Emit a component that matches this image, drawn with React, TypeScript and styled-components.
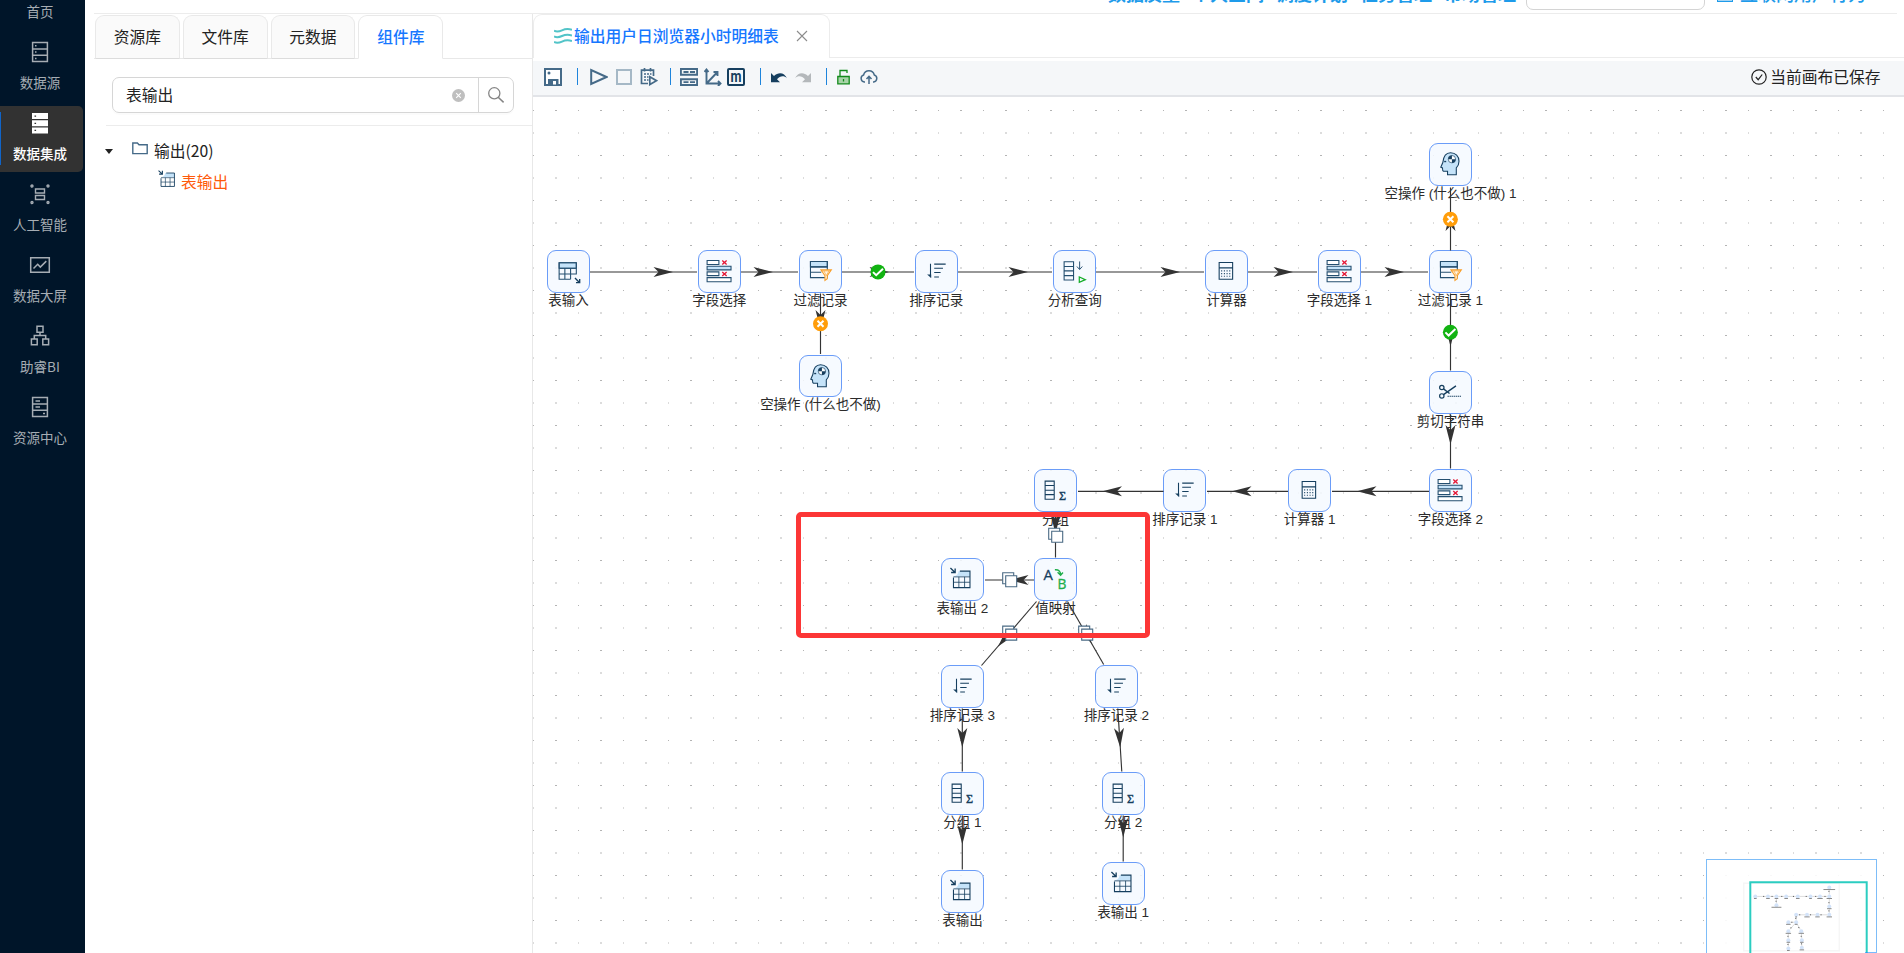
import React from "react";
import styled, { createGlobalStyle, css } from "styled-components";

const sans = `"Noto Sans CJK SC", "Noto Sans", sans-serif`;
const ink = "#163f5f";
const steel = "#456a88";

const GlobalStyle = createGlobalStyle`
  * { box-sizing: border-box; }
  body { margin: 0; overflow: hidden; background: #fff; font-family: ${sans}; font-size: 15.75px; color: #222; }
  svg { display: block; flex: none; }
`;

const Page = styled.div`
  display: flex;
  width: 1904px;
  height: 953px;
  overflow: hidden;
`;

/* ---------- left navigation ---------- */
const Sidebar = styled.nav`
  flex: none;
  width: 85px;
  height: 100%;
  background: #001529;
  overflow: hidden;
`;
const NavList = styled.div`
  display: flex;
  flex-direction: column;
  gap: 4.875px;
  margin-top: -35.75px;
`;
const NavItem = styled.div<{ $active?: boolean }>`
  display: flex;
  flex-direction: column;
  align-items: center;
  flex: none;
  width: 83px;
  height: 66px;
  padding: 6px 3px 0 0;
  font-size: 13.5px;
  color: #a6adb4;
  border-radius: 0 5px 5px 0;
  ${(p) =>
    p.$active &&
    css`
      color: #fff;
      font-weight: 500;
      background: linear-gradient(#1064c8, #1064c8) 0 6px / 1px 53px no-repeat #323232;
    `}
`;
const NavLabel = styled.span`
  margin-top: 8px;
  line-height: 20px;
  white-space: nowrap;
`;

/* ---------- header ---------- */
const Main = styled.div`
  flex: 1;
  min-width: 0;
  display: flex;
  flex-direction: column;
  padding-left: 9px;
`;
const Header = styled.header`
  flex: none;
  display: flex;
  align-items: flex-end;
  height: 14px;
  margin-right: 7px;
  padding-left: 1014px;
  border-bottom: 1px solid #ececec;
  overflow: hidden;
  color: #1e9bea;
  font-size: 18px;
  font-weight: 700;
`;
const HeaderLinks = styled.div`
  display: flex;
  gap: 12px;
  width: 418px;
  line-height: 24px;
  margin-bottom: 8px;
  white-space: nowrap;
`;
const HeaderInput = styled.div`
  flex: none;
  width: 179px;
  height: 36px;
  margin-bottom: 3px;
  border: 1px solid #d4d4d4;
  border-radius: 7px;
`;
const HeaderUser = styled.div`
  display: flex;
  align-items: flex-end;
  gap: 7px;
  margin: 0 0 8px 12px;
  line-height: 24px;
  font-weight: 500;
  white-space: nowrap;
`;
const UserMark = styled.i`
  width: 16px;
  height: 16px;
  margin-bottom: 3px;
  border: 1.5px solid #1e9bea;
  background: #a5d4f3;
`;
const Work = styled.div`
  flex: 1;
  min-height: 0;
  display: flex;
`;

/* ---------- component library panel ---------- */
const Library = styled.aside`
  flex: none;
  width: 439px;
  border-right: 1px solid #e8e8e8;
`;
const Tabs = styled.div`
  display: flex;
  gap: 3px;
  height: 45px;
  padding: 1px 0 0 1px;
  box-shadow: inset 0 -1px #e8e8e8;
`;
const Tab = styled.div<{ $active?: boolean }>`
  width: 84.8px;
  height: 44px;
  line-height: 42px;
  text-align: center;
  border: 1px solid #e9e9e9;
  border-radius: 9px 9px 0 0;
  border-bottom-color: ${(p) => (p.$active ? "#fff" : "#dcdcdc")};
  background: ${(p) => (p.$active ? "#fff" : "#fafafa")};
  color: ${(p) => (p.$active ? "#1677ff" : "#222")};
  font-weight: ${(p) => (p.$active ? 500 : 400)};
`;
const SearchRow = styled.div`
  display: flex;
  margin: 18px 18px 0 18px;
  height: 36px;
  border: 1px solid #d6d6d6;
  border-radius: 7px;
  box-shadow: 0 2px 0 rgba(0, 0, 0, 0.015);
`;
const SearchText = styled.div`
  flex: 1;
  padding-left: 13px;
  line-height: 34px;
`;
const ClearDot = styled.div`
  align-self: center;
  margin-right: 13px;
`;
const SearchButton = styled.div`
  width: 35px;
  border-left: 1px solid #d6d6d6;
  display: flex;
  align-items: center;
  justify-content: center;
`;
const Tree = styled.div`
  margin: 12px 0 0 12px;
  border-top: 1px solid #ececec;
  padding-top: 10px;
`;
const TreeRow = styled.div<{ $leaf?: boolean }>`
  display: flex;
  align-items: center;
  height: 30.5px;
  line-height: 30px;
  padding-left: ${(p) => (p.$leaf ? "52px" : "0")};
  gap: ${(p) => (p.$leaf ? "6px" : "0")};
  color: ${(p) => (p.$leaf ? "#ff5a0a" : "#222")};
`;
const Caret = styled.i`
  width: 0;
  height: 0;
  margin: 0 19px 0 -1px;
  border: 4px solid transparent;
  border-top: 5px solid #222;
  border-bottom: 0;
`;
const FolderBox = styled.div`
  margin: -6px 6px 0 0;
`;
const LeafIcon = styled.div`
  margin-top: -6px;
`;

/* ---------- editor ---------- */
const Editor = styled.section`
  flex: 1;
  min-width: 0;
  display: flex;
  flex-direction: column;
`;
const EditorTabs = styled.div`
  flex: none;
  height: 44px;
  margin-bottom: 2.5px;
  box-shadow: inset 0 -1px #ececec;
`;
const EditorTab = styled.div`
  display: flex;
  align-items: center;
  width: 297px;
  height: 44px;
  padding: 0 0 2px 20px;
  background: #fff;
  border: 1px solid #ececec;
  border-bottom: 0;
  border-radius: 9px 9px 0 0;
  color: #1677ff;
  font-weight: 500;
  white-space: nowrap;
`;
const TabTitle = styled.span`
  margin: 0 17px 0 2px;
  line-height: 24px;
`;
const Toolbar = styled.div`
  flex: none;
  display: flex;
  align-items: center;
  height: 36px;
  padding: 0 23.5px 2px 11px;
  background: #f5f7f9;
  border-bottom: 2px solid #e2e4e8;
  color: #222;
`;
const Tool = styled.div<{ $gap?: number }>`
  margin-left: ${(p) => p.$gap ?? 0}px;
`;
const Divider = styled.i<{ $gap: number }>`
  width: 1px;
  height: 17px;
  margin-left: ${(p) => p.$gap}px;
  background: #1d84dc;
`;
const SavedState = styled.div`
  display: flex;
  align-items: center;
  gap: 3px;
  margin-left: auto;
  line-height: 24px;
`;
const Canvas = styled.div`
  position: relative;
  flex: 1;
  overflow: hidden;
`;
const Layer = styled.svg`
  position: absolute;
  left: 0;
  top: 0;
  pointer-events: none;
`;
const OX = 533;
const OY = 96.5;
const NodeBox = styled.div<{ $x: number; $y: number }>`
  position: absolute;
  left: ${(p) => p.$x - OX - 21.4}px;
  top: ${(p) => p.$y - OY - 21.4}px;
  display: flex;
  flex-direction: column;
  align-items: center;
  width: 42.8px;
`;
const NodeTile = styled.div`
  width: 42.8px;
  height: 42.8px;
  flex: none;
  border: 1.125px solid #6a9cf8;
  border-radius: 9px;
  background: rgba(245, 249, 255, 0.86);
  svg { margin: -1px; }
`;
const NodeLabel = styled.span`
  margin-top: -1px;
  line-height: 17px;
  font-family: "Liberation Sans", ${sans};
  font-size: 13.5px;
  color: #2b2b2b;
  white-space: nowrap;
`;
const Highlight = styled.div`
  position: absolute;
  left: ${796 - OX}px;
  top: ${511.5 - OY}px;
  width: 354px;
  height: 126px;
  border: 5px solid #fc3636;
  border-radius: 5px;
`;
const MiniMap = styled.div`
  position: absolute;
  left: ${1706 - OX}px;
  top: ${859 - OY}px;
  width: 171px;
  height: 128px;
  border: 1px solid #7dbdf8;
  background: rgba(255, 255, 255, 0.9);
`;

/* ---------- icons ---------- */
type Kind =
  | "in" | "fields" | "filter" | "sort" | "query" | "calc"
  | "head" | "cut" | "group" | "map" | "out";

const glyphs: Record<Kind, React.ReactNode> = {
  in: (
    <>
      <path d="M36 38h51v16H36z" fill="#c5e3f9" />
      <path d="M87 73V38H36v49h34M36 54h51M36 71h51M53 54v33M70 54v33" />
      <path d="M83 83l14 14M97 86v11H86" stroke={ink} strokeWidth="4" />
    </>
  ),
  fields: (
    <>
      <path d="M27 31h35v12H27zM27 65h35v11H27zM27 82h71v12H27z" fill="#fff" />
      <path d="M27 48h71v11H27z" fill="#c5e3f9" />
      <path d="M72 31l13 12M85 31L72 43M72 65l13 12M85 65L72 77" stroke="#e51937" strokeWidth="4" />
    </>
  ),
  filter: (
    <>
      <path d="M34 34h50v16H34z" fill="#c5e3f9" />
      <path d="M34 34h50v48H34zM34 50h50M34 66h32" />
      <path d="M65 59h31L84 76v9l-7 5V76z" fill="#fff6e6" stroke="#f9a02c" />
      <path d="M66 62h28M74 62l7 14 8-14" stroke="#f9a02c" strokeWidth="2" />
    </>
  ),
  sort: (
    <>
      <path d="M46 41v40M57 42h34M57 54h26M57 67h19M57 80h14" stroke={ink} />
      <path d="M48 83L36 73h12z" fill={ink} stroke="none" />
    </>
  ),
  query: (
    <>
      <path d="M33 35h28v54H33zM33 49h28M33 62h28M33 76h28" />
      <path d="M79 34v23M71 49l8 9 8-9" strokeWidth="2.8" />
      <path d="M78 80v16l18-8z" stroke="#13ad27" strokeWidth="3.6" fill="none" />
    </>
  ),
  calc: (
    <>
      <path d="M42 37h40v50H42zM42 53h40" stroke={ink} />
      <path d="M48 62h30M48 70h30M48 78h30" stroke={ink} strokeDasharray="3 5" />
    </>
  ),
  head: (
    <>
      <path
        d="M55 94V84H43c-3-1-3-5-3-10l-5-2 6-14C43 39 51 29 64 29c15 0 25 11 25 25 0 9-3 15-8 20v20z"
        fill="#c5e3f9"
        stroke={ink}
      />
      <circle cx="68" cy="48" r="11" fill="#fff" stroke={ink} strokeWidth="2" />
      <path d="M68 48V37a11 11 0 0 0-11 11zM68 48v11a11 11 0 0 0 11-11z" fill={ink} stroke="none" />
      <path d="M45 55h6" stroke={ink} strokeWidth="4" />
    </>
  ),
  cut: (
    <>
      <circle cx="38" cy="49" r="6.5" stroke={ink} strokeWidth="3.6" />
      <circle cx="38" cy="74" r="6.5" stroke={ink} strokeWidth="3.6" />
      <path d="M43 53l18 14M43 70l37-26" stroke={ink} strokeWidth="4" />
      <path d="M55 75h40" stroke={ink} strokeWidth="3" strokeDasharray="4 2" />
    </>
  ),
  group: (
    <>
      <path d="M33 36h27v54H33zM33 49h27M33 63h27M33 76h27" stroke={ink} />
      <text x="74" y="91" fontSize="36" fontFamily="Liberation Serif, serif" fill={ink} stroke={ink} strokeWidth="1.2">Σ</text>
    </>
  ),
  map: (
    <>
      <text x="28" y="65" fontSize="44" fontFamily="Open Sans, sans-serif" fill={ink} stroke={ink} strokeWidth="0.8">A</text>
      <text x="70" y="92" fontSize="41" fontFamily="Open Sans, sans-serif" fill="#1fae4b" stroke="#1fae4b" strokeWidth="1">B</text>
      <path d="M62 35c12-1 17 5 17 15M70 42l9 9 7-8" stroke="#1fae4b" strokeWidth="4" />
    </>
  ),
  out: (
    <>
      <path d="M86 39v15H37c10-1 14-6 15-15z" fill="#c5e3f9" stroke="none" />
      <path d="M56 39h30v49H37V58" stroke={ink} />
      <path d="M37 56h49M37 72h49M53 56v32M70 56v32" stroke={ink} strokeWidth="2.4" />
      <path d="M28 30l13 12M42 31v12H30" stroke={ink} strokeWidth="4" />
    </>
  ),
};

const StepIcon = ({ kind, size = 42.8, box = "0 0 127 127" }: { kind: Kind; size?: number; box?: string }) => (
  <svg width={size} height={size} viewBox={box} fill="none" stroke="#244f70" strokeWidth="3.2">
    {glyphs[kind]}
  </svg>
);

const ServerIcon = ({ rows }: { rows: "dots" | "lines" }) => (
  <svg width="22" height="23" viewBox="0 0 22 23" fill="none" stroke="currentColor" strokeWidth="1.5">
    <path d="M3.6 1.6h14.8v19H3.6zM3.6 8h14.8M3.6 14.2h14.8" />
    {rows === "dots" ? (
      <path d="M6 4.8h1.5M6 11h1.5M6 17.4h1.5" />
    ) : (
      <path d="M6.5 5h4.5M6.5 11h4.5M14 17.4h2" />
    )}
  </svg>
);
const ServerSolid = () => (
  <svg width="22" height="23" viewBox="0 0 22 23" fill="#fff">
    <path d="M3 1h16v6H3zM3 8.2h16v6H3zM3 15.4h16v6H3z" />
    <path d="M5.5 3.5h1.6v1.2H5.5zM5.5 10.7h1.6v1.2H5.5zM5.5 17.8h1.6V19H5.5z" fill="#323232" />
  </svg>
);
const AiIcon = () => (
  <svg width="22" height="23" viewBox="0 0 22 23" fill="none" stroke="currentColor" strokeWidth="1.4">
    <path d="M6.5 6h9v4h-9zM6.5 12.5h9v4h-9z" />
    <circle cx="3" cy="3" r="1" /><circle cx="19" cy="3" r="1" />
    <circle cx="3" cy="19.5" r="1" /><circle cx="19" cy="19.5" r="1" />
  </svg>
);
const ScreenIcon = () => (
  <svg width="22" height="23" viewBox="0 0 22 23" fill="none" stroke="currentColor" strokeWidth="1.5">
    <path d="M1.700 3.700h18.600v14.600H1.700zM4.500 14.500l4.200-4.200 2.600 2.800 6-6" />
  </svg>
);
const BiIcon = () => (
  <svg width="22" height="23" viewBox="0 0 22 23" fill="none" stroke="currentColor" strokeWidth="1.5">
    <path d="M8 1.200h6v6H8zM2.400 13.900h5.800v5.800H2.400zM13.800 13.900h5.800v5.800h-5.800zM11 7.200v3.200M5.300 13.900v-3.500h11.400v3.500" />
  </svg>
);

const navItems: { label: string; icon: React.ReactNode; active?: boolean }[] = [
  { label: "首页", icon: <ServerIcon rows="dots" /> },
  { label: "数据源", icon: <ServerIcon rows="dots" /> },
  { label: "数据集成", icon: <ServerSolid />, active: true },
  { label: "人工智能", icon: <AiIcon /> },
  { label: "数据大屏", icon: <ScreenIcon /> },
  { label: "助睿BI", icon: <BiIcon /> },
  { label: "资源中心", icon: <ServerIcon rows="lines" /> },
];

/* ---------- flow data ---------- */
const nodes: { kind: Kind; x: number; y: number; label: string }[] = [
  { kind: "in", x: 568.5, y: 271.4, label: "表输入" },
  { kind: "fields", x: 719.3, y: 271.4, label: "字段选择" },
  { kind: "filter", x: 820.5, y: 271.4, label: "过滤记录" },
  { kind: "sort", x: 936.3, y: 271.4, label: "排序记录" },
  { kind: "query", x: 1074.7, y: 271.4, label: "分析查询" },
  { kind: "calc", x: 1226.5, y: 271.4, label: "计算器" },
  { kind: "fields", x: 1339.3, y: 271.4, label: "字段选择 1" },
  { kind: "filter", x: 1450.4, y: 271.4, label: "过滤记录 1" },
  { kind: "head", x: 1450.4, y: 164.5, label: "空操作 (什么也不做) 1" },
  { kind: "head", x: 820.5, y: 376, label: "空操作 (什么也不做)" },
  { kind: "cut", x: 1450.4, y: 392.8, label: "剪切字符串" },
  { kind: "fields", x: 1450.4, y: 490.6, label: "字段选择 2" },
  { kind: "calc", x: 1309.7, y: 490.6, label: "计算器 1" },
  { kind: "sort", x: 1184.8, y: 490.6, label: "排序记录 1" },
  { kind: "group", x: 1055.5, y: 490.6, label: "分组" },
  { kind: "map", x: 1055.5, y: 579.5, label: "值映射" },
  { kind: "out", x: 962.4, y: 579.5, label: "表输出 2" },
  { kind: "sort", x: 962.4, y: 686.6, label: "排序记录 3" },
  { kind: "sort", x: 1116.5, y: 686.6, label: "排序记录 2" },
  { kind: "group", x: 962.4, y: 793.4, label: "分组 1" },
  { kind: "group", x: 1123.2, y: 793.4, label: "分组 2" },
  { kind: "out", x: 962.4, y: 891.2, label: "表输出" },
  { kind: "out", x: 1123.2, y: 883.5, label: "表输出 1" },
];

/* x1, y1, x2, y2, arrow tip x, arrow tip y */
const edges: number[][] = [
  [590, 271.5, 697, 271.5, 673, 271.5],
  [741, 271.5, 798, 271.5, 773, 271.5],
  [842, 271.5, 914, 271.5, 889, 271.5],
  [958, 271.5, 1052, 271.5, 1028, 271.5],
  [1096, 271.5, 1204, 271.5, 1180, 271.5],
  [1248, 271.5, 1317, 271.5, 1293, 271.5],
  [1361, 271.5, 1428, 271.5, 1404, 271.5],
  [820.5, 293, 820.5, 353.5, 820.5, 329],
  [1450.5, 250, 1450.5, 187, 1450.5, 211],
  [1450.5, 293, 1450.5, 370, 1450.5, 346],
  [1450.5, 414, 1450.5, 468, 1450.5, 444],
  [1429, 490.8, 1332, 490.8, 1357, 490.8],
  [1288, 490.8, 1207, 490.8, 1232, 490.8],
  [1163.5, 490.8, 1078, 490.8, 1102.5, 490.8],
  [1055.5, 512, 1055.5, 557, 1055.5, 533],
  [1034, 579.5, 985, 579.5, 1009, 579.5],
  [1036.5, 601, 981.5, 665, 998, 646],
  [1067.5, 601, 1103.7, 664, 1091.7, 643],
  [962.3, 708, 962.3, 771, 962.3, 747],
  [1117.8, 708, 1121.8, 771, 1120.2, 747],
  [962.3, 815, 962.3, 869, 962.3, 844],
  [1123.2, 815, 1123.2, 861, 1123.2, 837],
];

const copies = [[1055.7, 534.7], [1009.7, 579.3], [1009.7, 632.6], [1085.7, 632.6]];

const Edge = ({ e }: { e: number[] }) => {
  const angle = (Math.atan2(e[3] - e[1], e[2] - e[0]) * 180) / Math.PI;
  return (
    <g>
      <line x1={e[0]} y1={e[1]} x2={e[2]} y2={e[3]} stroke="#333" strokeWidth="1.15" />
      <path d="M0 0L-19.5 -5L-14.5 0L-19.5 5z" fill="#333" transform={`translate(${e[4]} ${e[5]}) rotate(${angle})`} />
    </g>
  );
};

const Badge = ({ x, y, ok }: { x: number; y: number; ok?: boolean }) => (
  <g transform={`translate(${x} ${y})`} fill="none" stroke="#fff" strokeWidth="2">
    <circle r="7.5" fill={ok ? "#12b312" : "#ff9d0a"} stroke="none" />
    <path d={ok ? "M-5 .2L-1.8 3.3L5 -3.2" : "M-3 -3L3 3M3 -3L-3 3"} />
  </g>
);

const miniX = (x: number) => 48.3 + (x - 568.5) * 0.0839;
const miniY = (y: number) => 36.4 + (y - 271.4) * 0.0839;

export default function App() {
  return (
    <>
      <GlobalStyle />
      <Page>
        <Sidebar>
          <NavList>
            {navItems.map((n) => (
              <NavItem key={n.label} $active={n.active}>
                {n.icon}
                <NavLabel>{n.label}</NavLabel>
              </NavItem>
            ))}
          </NavList>
        </Sidebar>
        <Main>
          <Header>
            <HeaderLinks>
              <span>数据质量</span>
              <span>个人空间</span>
              <span>调度计划</span>
              <span>任务管理</span>
              <span>市场管理</span>
            </HeaderLinks>
            <HeaderInput />
            <HeaderUser>
              <UserMark />
              互联网用户行为
            </HeaderUser>
          </Header>
          <Work>
            <Library>
              <Tabs>
                <Tab>资源库</Tab>
                <Tab>文件库</Tab>
                <Tab>元数据</Tab>
                <Tab $active>组件库</Tab>
              </Tabs>
              <SearchRow>
                <SearchText>表输出</SearchText>
                <ClearDot>
                  <svg width="13" height="13" viewBox="0 0 13 13">
                    <circle cx="6.5" cy="6.5" r="6.5" fill="#bfbfbf" />
                    <path d="M4.2 4.2l4.6 4.6M8.8 4.2L4.2 8.8" stroke="#fff" strokeWidth="1.1" />
                  </svg>
                </ClearDot>
                <SearchButton>
                  <svg width="18" height="18" viewBox="0 0 18 18" fill="none" stroke="#858585" strokeWidth="1.3">
                    <circle cx="7.3" cy="7.3" r="5.6" />
                    <path d="M11.2 11.2l5.4 5.2" strokeWidth="1.5" />
                  </svg>
                </SearchButton>
              </SearchRow>
              <Tree>
                <TreeRow>
                  <Caret />
                  <FolderBox>
                    <svg width="16" height="13" viewBox="0 0 16 13" fill="none" stroke="#456a88" strokeWidth="1.4">
                      <path d="M.8 1h4.6l1.6 1.8h8.2v8.8H.8z" />
                    </svg>
                  </FolderBox>
                  输出(20)
                </TreeRow>
                <TreeRow $leaf>
                  <LeafIcon>
                    <StepIcon kind="out" size={17} box="26 28 62 62" />
                  </LeafIcon>
                  表输出
                </TreeRow>
              </Tree>
            </Library>
            <Editor>
              <EditorTabs>
                <EditorTab>
                  <svg width="18" height="16" viewBox="0 0 18 16" fill="none" stroke="#52c4c8" strokeWidth="2">
                    <path d="M0 2.700c3 1.600 5 1 8-.4s6-1.900 10-.5M0 8.400c3 1.600 5 1 8-.4s6-1.900 10-.5M0 14c3 1.600 5 1 8-.4s6-1.900 10-.5" />
                  </svg>
                  <TabTitle>输出用户日浏览器小时明细表</TabTitle>
                  <svg width="12" height="12" viewBox="0 0 12 12" stroke="#8c8c8c" strokeWidth="1.1">
                    <path d="M1 1l10 10M11 1L1 11" />
                  </svg>
                </EditorTab>
              </EditorTabs>
              <Toolbar>
                <Tool>
                  <svg width="18" height="18" viewBox="0 0 18 18">
                    <path d="M1 1h16v16H1z" fill="#fff" stroke={steel} strokeWidth="2" />
                    <path d="M4 11h10.500v6H4z" fill={steel} />
                    <path d="M9 13h3v3.500H9z" fill="#fff" />
                    <circle cx="5" cy="5" r="1.5" fill={steel} />
                  </svg>
                </Tool>
                <Divider $gap={15} />
                <Tool $gap={12}>
                  <svg width="18" height="18" viewBox="0 0 18 18" fill="none" stroke={steel} strokeWidth="2">
                    <path d="M1.200 2v14L16.500 9z" />
                  </svg>
                </Tool>
                <Tool $gap={8}>
                  <svg width="16" height="16" viewBox="0 0 16 16" fill="none" stroke="#a5b8c6" strokeWidth="2">
                    <path d="M1 1h14v14H1z" />
                  </svg>
                </Tool>
                <Tool $gap={8}>
                  <svg width="18" height="18" viewBox="0 0 18 18" fill="none" stroke={steel} strokeWidth="1.7">
                    <path d="M8 15.500H1.500V2.200h12V8M4.500 0v3.500M10.500 0v3.500" />
                    <path d="M4 6h7.500M4 9h4.500M4 12h4.500" strokeDasharray="2 1" />
                    <path d="M9.800 8.800v7.800l6.700-3.900z" />
                  </svg>
                </Tool>
                <Divider $gap={12} />
                <Tool $gap={9}>
                  <svg width="18" height="18" viewBox="0 0 18 18" fill="none" stroke={steel} strokeWidth="1.9">
                    <path d="M.9 1h16.200v5.800H.9zM.9 11.200h16.200V17H.9z" />
                    <path d="M3.500 4h5M10 4h5M3.500 14.100h5M10 14.100h5" />
                  </svg>
                </Tool>
                <Tool $gap={6}>
                  <svg width="18" height="18" viewBox="0 0 18 18" fill="none" stroke={steel} strokeWidth="1.9">
                    <path d="M2.500 1.500v14h14M2.500 15.500L13 4.500M.5 4l2-2.500 2 2.500M14 13l2.500 2.500L14 18M9.500 4H13.500v4" />
                  </svg>
                </Tool>
                <Tool $gap={5}>
                  <svg width="18" height="18" viewBox="0 0 18 18">
                    <rect x="1" y="1" width="16" height="16" rx="1" fill="none" stroke={ink} strokeWidth="2" />
                    <text x="9" y="14" textAnchor="middle" fontFamily="Roboto, sans-serif" fontWeight="700" fontSize="17" fill={ink} textLength="11" lengthAdjust="spacingAndGlyphs">m</text>
                  </svg>
                </Tool>
                <Divider $gap={15} />
                <Tool $gap={9}>
                  <svg width="18" height="18" viewBox="0 0 18 18" fill={ink}>
                    <path d="M1 5v9.200h9L7 11.300c3-3.600 7-4 10-1C14.500 4.500 8.500 3.500 4 8z" />
                  </svg>
                </Tool>
                <Tool $gap={6}>
                  <svg width="18" height="18" viewBox="0 0 18 18" fill="#b4b8bb">
                    <path d="M17 5v9.200H8l3-2.900c-3-3.600-7-4-10-1C3.500 4.500 9.500 3.500 14 8z" />
                  </svg>
                </Tool>
                <Divider $gap={14} />
                <Tool $gap={10}>
                  <svg width="13" height="16" viewBox="0 0 13 16" fill="none" stroke="#138a1c" strokeWidth="1.3">
                    <path d="M.8 7.500h11.400v7.300H.8z" fill="#a9d4a9" />
                    <path d="M3 7.500V1.500h7V4M6.500 10v2.500" />
                  </svg>
                </Tool>
                <Tool $gap={10}>
                  <svg width="18" height="16" viewBox="0 0 18 16" fill="none" stroke={steel} strokeWidth="1.5">
                    <path d="M5 13H4.300A3.600 3.600 0 0 1 3.600 6 5.500 5.500 0 0 1 14.300 6a3.600 3.600 0 0 1-.7 7H13M9 15V7.500M6.500 10L9 7.300l2.500 2.700" />
                  </svg>
                </Tool>
                <SavedState>
                  <svg width="16" height="16" viewBox="0 0 16 16" fill="none" stroke="#222" strokeWidth="1.2">
                    <circle cx="8" cy="8" r="7.200" />
                    <path d="M4.800 8l2.400 2.700 4-5.200" />
                  </svg>
                  当前画布已保存
                </SavedState>
              </Toolbar>
              <Canvas>
                <Layer width="1371" height="857" viewBox={`${OX} ${OY} 1371 857`}>
                  <defs>
                    <pattern id="grid" x="533" y="109.5" width="45" height="45" patternUnits="userSpaceOnUse">
                      <path d="M0 0h1v1H0zM22 0h2v1h-2z" fill="#b4b4b4" />
                      <path d="M0 22h1v2H0zM22 22h2v2h-2z" fill="#dcdcdc" />
                    </pattern>
                  </defs>
                  <rect x="533" y="100" width="1371" height="853" fill="url(#grid)" />
                </Layer>
                {nodes.map((n) => (
                  <NodeBox key={n.label} $x={n.x} $y={n.y}>
                    <NodeTile>
                      <StepIcon kind={n.kind} />
                    </NodeTile>
                    <NodeLabel>{n.label}</NodeLabel>
                  </NodeBox>
                ))}
                <Layer width="1371" height="857" viewBox={`${OX} ${OY} 1371 857`}>
                  {edges.map((e, i) => (
                    <Edge key={i} e={e} />
                  ))}
                  <Badge x={878} y={271.4} ok />
                  <Badge x={1450.4} y={331.7} ok />
                  <Badge x={820.5} y={323.3} />
                  <Badge x={1450.4} y={218.7} />
                  {copies.map(([x, y]) => (
                    <g key={`${x}-${y}`} transform={`translate(${x} ${y})`} fill="#fff" stroke="#4a6a84" strokeWidth="1.1">
                      <path d="M-7 -7H4V4H-7z" />
                      <path d="M-4 -4H7V7H-4z" />
                    </g>
                  ))}
                </Layer>
                <Highlight />
                <MiniMap>
                  <svg width="169" height="94" viewBox="0 0 169 94">
                    <rect x="36" y="22.500" width="97" height="69" fill="#f6f6f6" />
                    <rect x="37.500" y="24" width="94" height="66" fill="#fff" />
                    {edges.map((e, i) => (
                      <line key={i} x1={miniX(e[0])} y1={miniY(e[1])} x2={miniX(e[2])} y2={miniY(e[3])} stroke="#ddd" strokeWidth="1" />
                    ))}
                    {edges.map((e, i) => (
                      <rect key={i} x={miniX(e[4]) - 0.9} y={miniY(e[5]) - 0.5} width="1" height="1" fill="#555" />
                    ))}
                    {nodes.map((n) => (
                      <g key={n.label}>
                        <circle cx={miniX(n.x)} cy={miniY(n.y)} r="2" fill="#d3e3f9" />
                        <rect
                          x={miniX(n.x) - n.label.length * 0.45}
                          y={miniY(n.y) + 1.600}
                          width={n.label.length * 0.9}
                          height="1"
                          fill="#8b8b8b"
                        />
                      </g>
                    ))}
                    <path d="M43.300 94V22.300h116.400V94" fill="none" stroke="#2bcdc1" strokeWidth="2" />
                    <rect x="158" y="92.400" width="11" height="2" fill="#1d8cff" />
                  </svg>
                </MiniMap>
              </Canvas>
            </Editor>
          </Work>
        </Main>
      </Page>
    </>
  );
}
